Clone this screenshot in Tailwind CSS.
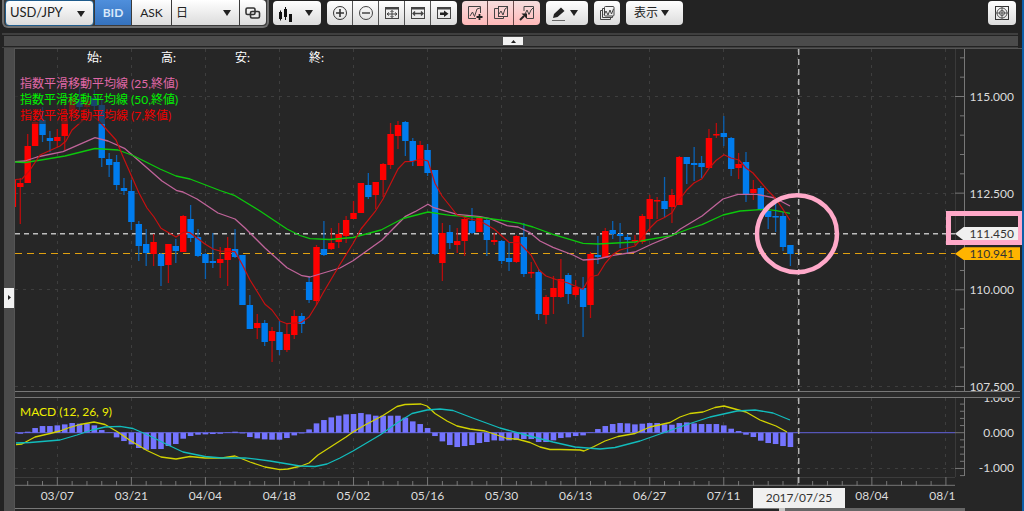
<!DOCTYPE html>
<html lang="ja">
<head>
<meta charset="utf-8">
<title>USD/JPY</title>
<script src="https://cdn.jsdelivr.net/npm/@tailwindcss/browser@4"></script>
</head>
<body class="flex h-screen flex-col overflow-hidden border-r-2 border-[#0b5ea8] bg-[#232323] font-['Lato','Noto_Sans_CJK_JP',sans-serif] text-xs text-[#dcdcdc]">

<header class="flex h-[33px] shrink-0 items-start pr-1.5 pl-0.5 text-[#222]">
  <div class="flex h-7 gap-px rounded-b-md border-2 border-t-0 border-[#707070] bg-[#3a3a3a] px-px">
    <label class="relative flex h-[26px] w-[89px] rounded-sm border border-[#1f5c8c] bg-linear-to-b from-white to-[#dcdcdc]">
      <select aria-label="通貨ペア" class="w-full appearance-none pl-1 text-[13px]"><option>USD/JPY</option></select>
      <svg class="pointer-events-none absolute top-2.5 right-2 h-1.5 w-2" viewBox="0 0 8 6"><path d="M0 0h8L4 6z" fill="#222"/></svg>
    </label>
    <button class="h-[25px] w-9 bg-linear-to-b from-[#4f8fdc] to-[#3572bd] text-xs font-bold text-[#d8e8fa]">BID</button>
    <button class="h-[25px] w-[39px] bg-linear-to-b from-white to-[#dcdcdc] text-xs">ASK</button>
    <label class="relative flex h-[25px] w-[67px] bg-linear-to-b from-white to-[#dcdcdc]">
      <select aria-label="足種" class="w-full appearance-none pl-1 text-xs"><option>日</option></select>
      <svg class="pointer-events-none absolute top-2.5 right-2 h-1.5 w-2" viewBox="0 0 8 6"><path d="M0 0h8L4 6z" fill="#222"/></svg>
    </label>
    <button aria-label="連動" class="flex h-[25px] w-[26px] items-center justify-center rounded-r-sm bg-linear-to-b from-white to-[#dcdcdc]">
      <svg class="h-3.5 w-4" viewBox="0 0 16 14" fill="none" stroke="#333" stroke-width="1.6"><rect x="1" y="2" width="9" height="6.500" rx="1.500"/><rect x="5.500" y="5.500" width="9" height="6.500" rx="1.500"/></svg>
    </button>
  </div>

  <button aria-label="チャート種類" class="mt-px ml-1 flex h-6 w-12 items-center justify-between rounded-sm bg-linear-to-b from-white to-[#dcdcdc] pr-2 pl-1.5">
    <svg class="mt-1 h-4 w-4" viewBox="0 0 16 16" fill="#111"><path d="M0 5h3v7H0zM1 3.500h1v10H1zM5 2h3v8H5zM6 0h1v13H6zM10 7h3v8h-3z"/></svg>
    <svg class="h-1.5 w-2" viewBox="0 0 8 6"><path d="M0 0h8L4 6z" fill="#222"/></svg>
  </button>

  <div class="mt-px ml-1.5 flex h-6 divide-x divide-[#555] overflow-hidden rounded-sm bg-linear-to-b from-white to-[#dcdcdc]">
    <button aria-label="拡大" class="flex w-[26px] items-center justify-center"><svg class="size-4" viewBox="0 0 16 16" fill="none" stroke="#333"><circle cx="8" cy="8" r="6.500"/><path d="M4 8h8M8 4v8" stroke-width="1.600"/></svg></button>
    <button aria-label="縮小" class="flex w-[26px] items-center justify-center"><svg class="size-4" viewBox="0 0 16 16" fill="none" stroke="#444"><circle cx="8" cy="8" r="6.500"/><path d="M4 8h8" stroke-width="1.600"/></svg></button>
    <button aria-label="全体" class="flex w-[26px] items-center justify-center"><svg class="size-4" viewBox="0 0 16 16" fill="none" stroke="#444"><rect x="1.500" y="2.500" width="13" height="11"/><path d="M1 3.500h14" stroke-width="2"/><path d="M3 9h10M8 5.500v7M5 7.500L3 9l2 1.500M11 7.500L13 9l-2 1.500M6.500 7L8 5.500 9.500 7M6.500 11L8 12.500 9.500 11" /></svg></button>
    <button aria-label="幅合わせ" class="flex w-[26px] items-center justify-center"><svg class="size-4" viewBox="0 0 16 16" fill="none" stroke="#444"><rect x="1.500" y="2.500" width="13" height="11"/><path d="M1 3.500h14" stroke-width="2"/><path d="M3 8.500h10M5 6.500l-2 2 2 2M11 6.500l2 2-2 2" stroke-width="1.300"/></svg></button>
    <button aria-label="最新へ" class="flex w-[26px] items-center justify-center"><svg class="size-4" viewBox="0 0 16 16" fill="none" stroke="#444"><rect x="1.500" y="2.500" width="13" height="11"/><path d="M1 3.500h14" stroke-width="2"/><path d="M4 7.500h4V5.500l4.500 3.300L8 12v-2H4z" fill="#222" stroke="none"/></svg></button>
  </div>

  <div class="mt-px ml-[5px] flex h-6 divide-x divide-[#6b4a4a] overflow-hidden rounded-sm bg-linear-to-b from-[#f6dede] to-[#ffb9b9]">
    <button aria-label="指標追加" class="flex w-[26px] items-center justify-center"><svg class="size-4" viewBox="0 0 16 16" fill="none" stroke="#444"><path d="M9 13.500H1.500v-12h12V8"/><path d="M3 11l2.500-4 2 4.500L10 4l3-1"/><path d="M12.500 9v6M9.500 12h6" stroke="#222" stroke-width="1.800"/></svg></button>
    <button aria-label="指標複製" class="flex w-[26px] items-center justify-center"><svg class="size-4" viewBox="0 0 16 16" fill="none" stroke="#444"><path d="M5 3.500H1.500v10h9V12"/><rect x="5.500" y="1.500" width="9" height="10"/><path d="M6 9l2-3 2 4 2-6 2-1.500"/></svg></button>
    <button aria-label="指標縮小" class="flex w-[26px] items-center justify-center"><svg class="size-4" viewBox="0 0 16 16" fill="none" stroke="#444"><path d="M5 6V1.500h9.500v12H8"/><path d="M6 9l2-4 2 4.500L12 5l2-2"/><path d="M1 15l4-4" stroke="#222" stroke-width="2"/><path d="M2.500 8.500H8V14z" fill="#222" stroke="none"/></svg></button>
  </div>

  <button aria-label="描画" class="mt-px ml-1.5 flex h-6 w-[42px] items-center justify-between rounded-sm bg-linear-to-b from-white to-[#dcdcdc] pr-2.5 pl-1.5">
    <svg class="mt-0.5 h-4 w-3.5" viewBox="0 0 14 16"><path d="M1 12l1-4 7-6.500L12.500 5 5.500 11z" fill="#222"/><path d="M0 14.500h13" stroke="#666"/></svg>
    <svg class="h-1.5 w-2" viewBox="0 0 8 6"><path d="M0 0h8L4 6z" fill="#222"/></svg>
  </button>

  <button aria-label="チャート一覧" class="mt-px ml-1.5 flex h-6 w-[26px] items-center justify-center rounded-sm bg-linear-to-b from-white to-[#dcdcdc]">
    <svg class="size-4" viewBox="0 0 16 16" fill="none" stroke="#444"><path d="M3 5.500H1.500v9h10V13M3.500 5V3.500H5M3.500 5v7.500h10V11"/><rect x="5.500" y="1.500" width="9.500" height="9.500" rx="1"/><path d="M5 10l2-4 2 4 2-5 1.500 4 2-5"/></svg>
  </button>

  <button class="mt-px ml-1.5 flex h-6 w-[57px] items-center justify-between rounded-sm bg-linear-to-b from-white to-[#dcdcdc] pr-3.5 pl-2 text-xs"><span>表示</span>
    <svg class="h-1.5 w-2" viewBox="0 0 8 6"><path d="M0 0h8L4 6z" fill="#222"/></svg>
  </button>

  <button aria-label="全画面" class="mt-px ml-auto flex h-6 w-7 items-center justify-center rounded-sm bg-linear-to-b from-white to-[#dcdcdc]">
    <svg class="size-4" viewBox="0 0 16 16" fill="none" stroke="#555"><rect x="1.500" y="1.500" width="13" height="13" stroke="#333"/><circle cx="8" cy="8" r="5"/><circle cx="8" cy="8" r="2.500"/><path d="M1 8h14M8 1v14"/></svg>
  </button>
</header>

<div class="mr-1 ml-0.5 flex h-[15px] shrink-0 flex-col border-t-2 border-b border-[#3f3f3f] pt-px">
  <div class="ml-0.5 flex h-2.5 justify-center bg-[#4b4b4b]">
    <button aria-label="上部パネル" class="mt-px mr-0 ml-1 flex h-2 w-5 items-center justify-center bg-[#f2f2f2]"><svg class="h-[3px] w-[5px]" viewBox="0 0 5 3"><path d="M0 3h5L2.500 0z" fill="#222"/></svg></button>
  </div>
</div>

<main class="flex min-h-0 flex-1 pl-1">
  <div class="flex w-2.5 shrink-0 items-center bg-[#4b4b4b]">
    <button aria-label="左パネル" class="mt-9 flex h-5 w-2.5 items-center justify-center bg-[#f2f2f2]"><svg class="h-[5px] w-[3px]" viewBox="0 0 3 5"><path d="M0 0v5L3 2.500z" fill="#222"/></svg></button>
  </div>
  <div class="flex min-w-0 flex-1 flex-col border-l border-[#555] bg-[#262626]">

    <section class="relative flex min-h-0 flex-1 border-t border-[#555]">
      <div class="relative min-w-0 flex-1">
        <svg id="price" class="absolute inset-0 size-full" viewBox="15 49 940 342" preserveAspectRatio="none"></svg>
        <div class="relative pt-px text-xs text-white">
          <div class="flex pl-[72px]"><span class="w-[74px]">始:</span><span class="w-[74px]">高:</span><span class="w-[74px]">安:</span><span class="w-[74px]">終:</span></div>
          <div class="mt-2.5 flex flex-col items-start leading-4">
            <span class="bg-[#262626]/65 pr-1 pl-[5px] text-[#e068a8]">指数平滑移動平均線 (25,終値)</span>
            <span class="bg-[#262626]/65 pr-1 pl-[5px] text-[#00f000]">指数平滑移動平均線 (50,終値)</span>
            <span class="bg-[#262626]/65 pr-1 pl-[5px] text-[#f00000]">指数平滑移動平均線 (7,終値)</span>
          </div>
        </div>
      </div>
      <div class="relative w-[67px] shrink-0">
        <div class="absolute inset-0 overflow-hidden">
          <svg id="priceAxis" class="absolute inset-0 h-full w-2.5" viewBox="0 49 10 342" preserveAspectRatio="none"></svg>
          <div id="priceLabels"></div>
        </div>
        <div class="absolute top-[52%] left-0 flex h-3.5 w-16 items-center justify-end bg-[#f0f0f0] pr-[5px] text-[#333] [clip-path:polygon(0_50%,9px_0,100%_0,100%_100%,9px_100%)]">111.450</div>
        <div class="absolute top-[58%] left-0 flex h-[13px] w-[65px] items-center justify-end bg-[#ffb400] pr-1.5 text-[#333] [clip-path:polygon(0_50%,9px_0,100%_0,100%_100%,9px_100%)]">110.941</div>
        <div class="absolute top-[47.400%] -right-px h-[34px] w-[77px] border-[5px] border-[#ffa9c9]"></div>
      </div>
    </section>

    <div class="mr-0.5 h-[7px] shrink-0 border-y border-[#777] bg-[#2b2b2b]"></div>

    <section class="flex h-[79px] shrink-0">
      <div class="relative min-w-0 flex-1">
        <svg id="macd" class="absolute inset-0 size-full" viewBox="15 398 940 79" preserveAspectRatio="none"></svg>
        <div class="relative pt-[5px] pl-[5px] leading-[18px] text-[#f0f000]">MACD (12, 26, 9)</div>
      </div>
      <div class="relative w-[67px] shrink-0 overflow-hidden">
        <svg id="macdAxis" class="absolute inset-0 h-full w-2.5" viewBox="0 398 10 79" preserveAspectRatio="none"></svg>
        <div id="macdLabels"></div>
      </div>
    </section>

    <section class="flex h-[34px] shrink-0">
      <div class="relative min-w-0 flex-1 overflow-hidden">
        <svg id="timeTicks" class="block h-[9px] w-full" viewBox="15 477 940 9" preserveAspectRatio="none"></svg>
        <div id="timeLabels"></div>
        <div class="absolute top-[11px] left-[83.400%] flex h-5 w-[92px] -translate-x-1/2 items-center justify-center bg-[#f0f0f0] text-[#333]">2017/07/25</div>
        <div class="absolute top-[31px] flex h-[3px] w-full"><span class="h-px w-[81.300%] bg-[#777]"></span><span class="w-1.5 bg-[#c8c8c8]"></span><span class="flex-1 bg-[#666]"></span></div>
      </div>
      <div class="w-[67px] shrink-0 pt-[31px]"><div class="h-[3px] w-2.5 bg-[#666]"></div></div>
    </section>
  </div>
</main>

<script>
const $ = id => document.getElementById(id);
const X = i => 20.3 + 7.405 * i;
const line = (x1, y1, x2, y2, c, extra = '') => `<line x1="${x1}" y1="${y1}" x2="${x2}" y2="${y2}" stroke="${c}" ${extra}/>`;
const poly = (pts, c, w = 1.3) => `<polyline points="${pts}" fill="none" stroke="${c}" stroke-width="${w}" stroke-linejoin="round"/>`;

// direction, high, body top, body bottom, low
const candles = `r 180 180 207 207|r 178 183 187 224|r 134 146 183 183|r 112 122 146 146|b 107 120 135 142|b 131 138 141 152|r 129 137 141 147|r 100 118 136 150|r 96 98 113 113|b 87 101 107 110|r 96 101 107 110|b 90 98 106 110|b 100 105 158 167|b 153 159 165 177|b 155 162 185 190|b 178 188 191 195|b 180 191 222 230|b 221 224 246 261|b 229 244 253 266|r 234 242 254 266|b 253 254 266 286|r 244 244 265 283|b 239 246 251 263|r 215 216 252 252|b 205 219 238 242|b 229 237 256 257|b 253 254 263 279|b 233 261 263 268|r 247 259 263 278|r 237 248 260 286|b 229 249 257 258|b 255 255 305 305|b 295 305 329 329|r 314 323 328 339|b 320 323 342 346|r 327 331 341 362|b 321 332 350 355|r 323 334 350 352|r 310 316 335 339|b 313 316 324 333|b 277 282 300 303|r 245 247 301 305|b 221 249 255 256|r 228 243 249 250|r 223 234 242 248|r 216 220 236 243|r 201 213 219 219|r 183 183 213 213|b 173 185 197 199|r 182 182 195 209|r 163 164 180 197|r 123 134 165 169|r 121 125 136 149|b 121 122 141 156|b 138 141 161 166|r 141 145 166 166|b 144 150 173 176|b 170 170 254 255|r 223 233 263 281|b 225 232 243 249|r 228 241 245 253|r 218 219 241 256|b 208 221 233 234|r 216 218 232 232|b 219 220 240 256|r 233 240 242 245|b 240 241 261 264|b 242 258 262 271|r 235 236 262 263|b 223 237 274 277|r 262 272 273 278|b 269 272 314 320|r 295 297 315 324|r 276 288 297 314|r 259 279 297 298|b 273 275 294 304|r 280 287 295 297|b 277 288 307 337|r 252 254 305 318|b 236 255 257 264|r 228 231 258 258|b 221 230 234 239|b 223 234 236 248|b 234 237 240 253|r 235 240 241 245|r 214 216 242 244|r 195 199 219 232|r 197 200 201 219|b 177 201 209 218|r 189 195 207 223|r 156 157 205 205|b 157 157 164 184|b 147 163 165 181|b 156 163 167 178|r 129 138 168 168|r 123 134 135 138|b 116 133 137 146|b 137 138 169 176|r 153 164 168 179|b 152 162 194 202|r 180 189 193 200|b 186 188 210 211|b 210 211 217 229|b 203 216 217 232|b 212 216 247 251|b 245 245 254 266`
  .split('|').map(s => { const [d, ...v] = s.split(' '); return [d, ...v.map(Number)]; });

const ema25 = '15,161.7 25,161 37,157 63,151.7 95,137.7 108,141 125,148.7 140,161.7 162,181 177,190.7 183,192 197,199 218,213 235,219 245,228 265,248 287,267.7 302,275.7 310,277 340,268 353,260.7 382,240 405,216.7 415,211.7 428,204.3 433,207.3 457,214.3 480,216.7 490,218.7 507,225.7 518,227 530,232.7 540,241 553,247.3 573,255 583,260 598,259 613,255.3 635,252 652,244 672,235.7 680,229.3 702,216 723,199 738,194.3 757,194.3 775,198 790,206';
const ema50 = '15,162 25,162.5 38,160.5 65,156 95,148.5 118,150 133,155.5 160,169 176,176 190,179 220,190.5 235,195.7 260,211 287,229 300,235.5 310,238.7 330,239.5 353,237.5 381,230 403,218.5 428,212 450,215.3 480,217.3 500,220 520,223.3 533,227 553,234.3 583,243.3 598,244 635,242 671,235.7 690,228.5 702,224.7 723,215 740,211 765,209.3 775,210.3 790,213.3';
const ema7 = '15,179.5 22,179 30,170 40,155 60,146 66,141 72,130 90,114 98,120 116,140 124,159 139,193 147,208 154,217 161,228.3 176,237 184,232 190,232.7 205,244 213,249 220,251 235,251.7 242,264 250,280 265,304.3 272,310 280,321 287,323.7 301,322.5 309,317 317,304 323,293 339,266 353,243.5 361,229 375,211.7 383,199 390,185 398,169 405,161.7 413,161.3 420,159 428,161 435,183.3 442,196 450,206 457,215 470,219 480,221 494,229 509,242.3 519,242.7 531,255 539,270 546,276 556,279.5 568,283 575,286 583,289.3 590,277 598,275 605,263.7 613,254.3 620,250 635,246 642,238 650,228 657,221 664,217.7 672,212.7 680,199 687,189.7 694,183 702,178.7 709,168.3 716,160.5 724,154.7 731,158 739,160 746,168 753,173 768,190.7 776,199 783,209.3 790,220.3';
const macdLine = '16,444.7 22,444 35,437 50,433.5 60,431 68,428 80,424.5 94,422 105,424.5 117,431.5 131,441 147,450.5 161,457 176,459 190,456.5 205,458 222,458 235,456 250,462 265,467 280,469.7 288,469 301,466 309,463 318,455 332,446 346,437 353,432 365,425 383,415.5 397,406.5 405,404.5 421,404 427,406 435,413.5 447,421 457,426 470,429 485,431 497,435 507,438.5 517,439 530,442.5 540,447 550,449.5 560,449.5 580,450 584,451 594,446.5 605,441 618,436.5 635,433.5 650,427 670,422.5 680,417 690,413.5 703,412 715,407.5 724,406 735,409 746,412 760,420 776,426 787,432';
const signal = '16,443 30,442.5 60,440 77,435 92,430 105,427 120,426.3 133,428.5 150,436 166,444 183,452 205,456.5 222,458 245,457.8 270,461 300,466 315,466.5 327,464 340,458 353,451 380,435 397,423 412,413.5 427,410 440,409 453,410.5 470,417 500,428 524,434.5 553,442 575,447 600,449 615,447.5 640,441 660,434 690,423.5 710,417 737,411 755,410 773,413 790,420';
// histogram heights in thirds of a pixel, positive is up
const hist = [-3,3,14,20,20,22,25,29,27,27,22,8,1,-14,-25,-35,-46,-51,-49,-49,-40,-34,-18,-10,-6,-5,-4,-3,1,3,-2,-13,-17,-20,-21,-21,-16,-8,-2,10,28,38,46,51,55,56,59,55,51,51,51,51,45,34,26,14,-10,-26,-37,-43,-40,-37,-31,-28,-23,-24,-23,-22,-19,-19,-28,-28,-23,-16,-14,-10,-8,1,11,20,26,29,28,25,27,29,29,25,24,29,31,28,26,26,26,22,12,5,-6,-13,-24,-31,-34,-40,-43];

const dates = ['03/07','03/21','04/04','04/18','05/02','05/16','05/30','06/13','06/27','07/11','','08/04','08/15'];
const gx = dates.map((_, k) => 57.3 + 74.05 * k);
const prices = [['115.000', 96.5], ['112.500', 193.5], ['110.000', 289.5], ['107.500', 386.5]];
const dash = 'stroke-dasharray="3 5"';
const grid = (y1, y2, ys) => gx.map(x => line(Math.floor(x) + .5, y1, Math.floor(x) + .5, y2, '#3e3e3e', dash)).join('') + ys.map(y => line(15, y, 955, y, '#3e3e3e', dash)).join('');
const cross = (y1, y2) => line(798.7, y1, 798.7, y2, '#b4b4b4', 'stroke-width="1.5" stroke-dasharray="6 4"');

let s = grid(49, 391, prices.map(p => p[1]));
s += line(15, 233.7, 955, 233.7, '#bdbdbd', 'stroke-width="1.5" stroke-dasharray="5 4"');
s += line(15, 253.5, 955, 253.5, '#e0a010', 'stroke-width="1.2" stroke-dasharray="7 5"');
candles.forEach(([d, h, t, b, l], k) => {
  const x = X(k - 1);
  s += line(x, h, x, l, d === 'r' ? '#b80c0c' : '#0a62b4', 'stroke-width="1.3"');
  s += `<rect x="${x - 3.2}" y="${t}" width="6.4" height="${Math.max(1.5, b - t)}" fill="${d === 'r' ? '#ff0000' : '#007cee'}"/>`;
});
s += poly(ema25, '#c0649a') + poly(ema50, '#0cc80c') + poly(ema7, '#c81010', 1.2) + cross(49, 391);
s += '<ellipse cx="797" cy="233.7" rx="40" ry="38.5" fill="none" stroke="#ffa9c9" stroke-width="4.5"/>';
$('price').innerHTML = s;

s = grid(398, 477, [468.5]) + line(15, 432.7, 955, 432.7, '#5656b8', 'stroke-width="1.3"');
hist.forEach((v, k) => { const h = Math.abs(v) / 3; s += `<rect x="${X(k) - 2.8}" y="${v > 0 ? 432.7 - h : 432.7}" width="5.6" height="${h}" fill="#7474ff"/>`; });
s += poly(macdLine, '#d2d200') + poly(signal, '#12bcbc') + cross(398, 477);
$('macd').innerHTML = s;

s = line(.5, 49, .5, 391, '#3a3a3a') + line(9.5, 49, 9.5, 391, '#777');
for (let k = -2; k < 16; k++) { const y = 96.5 + 19.33 * k; s += line(k % 5 ? 5 : 0, y, 9, y, '#777'); }
$('priceAxis').innerHTML = s;
s = line(.5, 398, .5, 477, '#3a3a3a') + line(9.5, 398, 9.5, 476, '#777');
for (let k = -4; k < 7; k++) { const y = 432.7 + 7.15 * k; s += line(k % 5 ? 5 : 0, y, 9, y, '#777'); }
$('macdAxis').innerHTML = s;

s = line(15, 477.5, 955, 477.5, '#3c3c3c') + line(15, 485.5, 955, 485.5, '#666', 'stroke-width="1.5"');
for (let k = 0; k < 63; k++) { const x = 27.7 + 14.81 * k; s += line(x, k % 5 === 2 ? 477 : 481, x, 486, '#777'); }
$('timeTicks').innerHTML = s + cross(477, 485);

const axisLabel = (t, pct) => `<span class="absolute right-2 -translate-y-1/2 leading-4" style="top:${pct}%">${t}</span>`;
$('priceLabels').innerHTML = prices.map(([t, y]) => axisLabel(t, (y - 49) / 3.42)).join('');
$('macdLabels').innerHTML = [['1.000', 397.5], ['0.000', 432.7], ['-1.000', 468]].map(([t, y]) => axisLabel(t, (y - 398) / .79)).join('');
$('timeLabels').innerHTML = dates.map((t, k) => t && `<span class="absolute top-[11px] -translate-x-1/2 leading-4" style="left:${(gx[k] - 15) / 9.4}%">${t}</span>`).join('');
</script>
</body>
</html>
